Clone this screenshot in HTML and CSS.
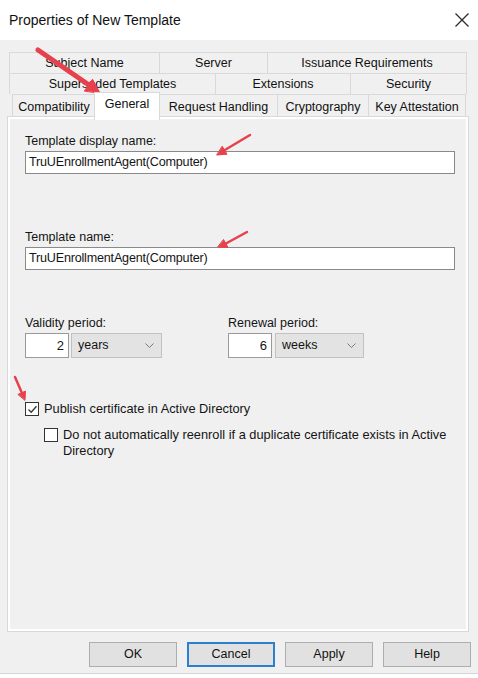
FILE: index.html
```html
<!DOCTYPE html>
<html>
<head>
<meta charset="utf-8">
<link rel="stylesheet" href="styles.css">
</head>
<body>
<div class="window">
  <div class="titlebar">
    <span class="title">Properties of New Template</span>
    <svg class="close" width="16" height="16" viewBox="0 0 16 16"><path d="M1.5 1.5 L14.5 14.5 M14.5 1.5 L1.5 14.5" stroke="#2b2b2b" stroke-width="1.3" fill="none"/></svg>
  </div>
  <div class="content">
    <div class="tabs">
      <div class="tabrow row1">
        <div class="tab">Subject Name</div>
        <div class="tab">Server</div>
        <div class="tab last">Issuance Requirements</div>
      </div>
      <div class="tabrow row2">
        <div class="tab">Superseded Templates</div>
        <div class="tab">Extensions</div>
        <div class="tab last">Security</div>
      </div>
      <div class="tabrow row3">
        <div class="tab">Compatibility</div>
        <div class="tab selected">General</div>
        <div class="tab">Request Handling</div>
        <div class="tab">Cryptography</div>
        <div class="tab last">Key Attestation</div>
      </div>
    </div>
    <div class="panel">
      <div class="page">
        <div class="label first">Template display name:</div>
        <div class="textbox">TruUEnrollmentAgent(Computer)</div>
        <div class="label second">Template name:</div>
        <div class="textbox">TruUEnrollmentAgent(Computer)</div>
        <div class="periods">
          <div class="period">
            <div class="label">Validity period:</div>
            <div class="period-row">
              <div class="numbox validity">2</div>
              <div class="combo validity">years<svg class="chev" width="9" height="5" viewBox="0 0 9 5"><path d="M0.5 0.5 L4.5 4.5 L8.5 0.5" stroke="#7a7a7a" stroke-width="1" fill="none"/></svg></div>
            </div>
          </div>
          <div class="period">
            <div class="label">Renewal period:</div>
            <div class="period-row">
              <div class="numbox">6</div>
              <div class="combo renewal">weeks<svg class="chev" width="9" height="5" viewBox="0 0 9 5"><path d="M0.5 0.5 L4.5 4.5 L8.5 0.5" stroke="#7a7a7a" stroke-width="1" fill="none"/></svg></div>
            </div>
          </div>
        </div>
        <div class="check publish">
          <span class="box"><svg width="11" height="11" viewBox="0 0 11 11"><path d="M1.5 5.5 L4.2 8.2 L9.5 2.2" stroke="#333" stroke-width="1.3" fill="none"/></svg></span>
          <span class="check-text">Publish certificate in Active Directory</span>
        </div>
        <div class="check sub">
          <span class="box"></span>
          <span class="check-text wrap">Do not automatically reenroll if a duplicate certificate exists in Active Directory</span>
        </div>
      </div>
    </div>
    <div class="buttons">
      <div class="btn">OK</div>
      <div class="btn default">Cancel</div>
      <div class="btn">Apply</div>
      <div class="btn">Help</div>
    </div>
  </div>
  <div class="footer"></div>
  <svg class="annotations" width="478" height="678" viewBox="0 0 478 678">
    <g fill="#e6414d" stroke="#e6414d" stroke-linecap="round">
      <line x1="38" y1="50" x2="89" y2="85" stroke-width="5"/>
      <polygon points="84.5,90.8 92.5,79.2 100,93" stroke-width="1"/>
      <line x1="250" y1="135" x2="224" y2="150.5" stroke-width="2.5"/>
      <polygon points="222.4,146.5 227,154.2 217,155" stroke-width="1"/>
      <line x1="247" y1="232" x2="225" y2="244" stroke-width="2.5"/>
      <polygon points="223.7,239.8 228.1,247.6 218,247" stroke-width="1"/>
      <line x1="15" y1="377" x2="21.5" y2="392" stroke-width="2.5"/>
      <polygon points="18.2,394.3 25.5,391.1 25,400" stroke-width="1"/>
    </g>
  </svg>
</div>
</body>
</html>
```

FILE: styles.css
```css
* { box-sizing: border-box; }
html, body { margin: 0; padding: 0; }
body {
  width: 478px;
  height: 678px;
  overflow: hidden;
  background: #fff;
  font-family: "Liberation Sans", Arial, sans-serif;
  font-size: 12.5px;
  color: #141414;
}
.window {
  position: relative;
  width: 478px;
  height: 678px;
  display: flex;
  flex-direction: column;
}
.titlebar {
  height: 40px;
  background: #fff;
  display: flex;
  align-items: center;
  justify-content: space-between;
  padding: 0 8px 0 9px;
}
.title {
  font-size: 14px;
  color: #111;
}
.close { display: block; }
.content {
  background: #f0f0f0;
  padding: 12px 7px 0 7px;
  height: 633px;
  display: flex;
  flex-direction: column;
}
.footer {
  flex: 1;
  background: #fff;
  border-top: 1px solid #d4d4d4;
}
.tabs {
  margin-left: 2px;
  width: 458px;
  display: flex;
  flex-direction: column;
}
.tabrow {
  display: grid;
  height: 21px;
}
.row1 { grid-template-columns: 150px 108px 1fr; }
.row2 { grid-template-columns: 206px 135px 1fr; }
.row3 {
  grid-template-columns: 83px 64px 118px 91px 1fr;
  margin: 0 1px 0 3px;
  height: 22px;
}
.tab {
  border-top: 1px solid #d9d9d9;
  border-left: 1px solid #d9d9d9;
  background: #f0f0f0;
  text-align: center;
  line-height: 20px;
  white-space: nowrap;
  color: #111;
}
.row3 .tab { line-height: 24px; }
.tab.last { border-right: 1px solid #d9d9d9; }
.row3 .tab.selected {
  position: relative;
  z-index: 1;
  background: #fff;
  margin: -2px -1px -1px -1px;
  border-right: 1px solid #d9d9d9;
  line-height: 22px;
}
.panel {
  width: 462px;
  height: 516px;
  border: 1px solid #d9d9d9;
  background: #fff;
  padding: 2px;
}
.page {
  height: 100%;
  background: #f0f0f0;
  padding: 14px 11px 0 15px;
  display: flex;
  flex-direction: column;
}
.label {
  line-height: 16px;
  height: 16px;
}
.label.second { margin-top: 55px; }
.textbox {
  margin-top: 2px;
  width: 430px;
  height: 23px;
  border: 1px solid #8a8a8a;
  background: #fff;
  padding-left: 3px;
  line-height: 21px;
  font-size: 12.6px;
  letter-spacing: -0.2px;
}
.periods {
  margin-top: 45px;
  display: grid;
  grid-template-columns: 203px auto;
}
.period-row {
  margin-top: 2px;
  display: flex;
  gap: 2px;
}
.numbox {
  width: 44px;
  height: 25px;
  border: 1px solid #9a9a9a;
  background: #fff;
  text-align: right;
  padding-right: 4px;
  line-height: 23px;
  font-size: 13px;
}
.combo {
  height: 25px;
  border: 1px solid #c2c2c2;
  background: #e3e3e3;
  padding: 0 6px;
  line-height: 23px;
  display: flex;
  align-items: center;
  justify-content: space-between;
}
.combo.validity { width: 91px; }
.combo.renewal { width: 89px; margin-left: 1px; }
.chev { display: block; margin-right: 1px; }
.check {
  display: flex;
  align-items: flex-start;
  gap: 5px;
}
.check.publish { margin-top: 43px; }
.check.sub { margin-top: 10px; margin-left: 19px; }
.box {
  width: 14px;
  height: 14px;
  border: 1px solid #333;
  background: #fff;
  display: flex;
  align-items: center;
  justify-content: center;
  margin-top: 1px;
  flex: none;
}
.box svg { display: block; }
.check-text { line-height: 16px; font-size: 12.8px; }
.check-text.wrap { width: 395px; }
.buttons {
  margin-top: 10px;
  display: flex;
  justify-content: flex-end;
  gap: 10px;
}
.btn {
  width: 88px;
  height: 25px;
  border: 1px solid #adadad;
  background: #e1e1e1;
  text-align: center;
  line-height: 23px;
  color: #111;
}
.btn.default {
  border: 2px solid #2b7fcf;
  line-height: 21px;
}
.annotations {
  position: absolute;
  left: 0;
  top: 0;
  pointer-events: none;
}
```
